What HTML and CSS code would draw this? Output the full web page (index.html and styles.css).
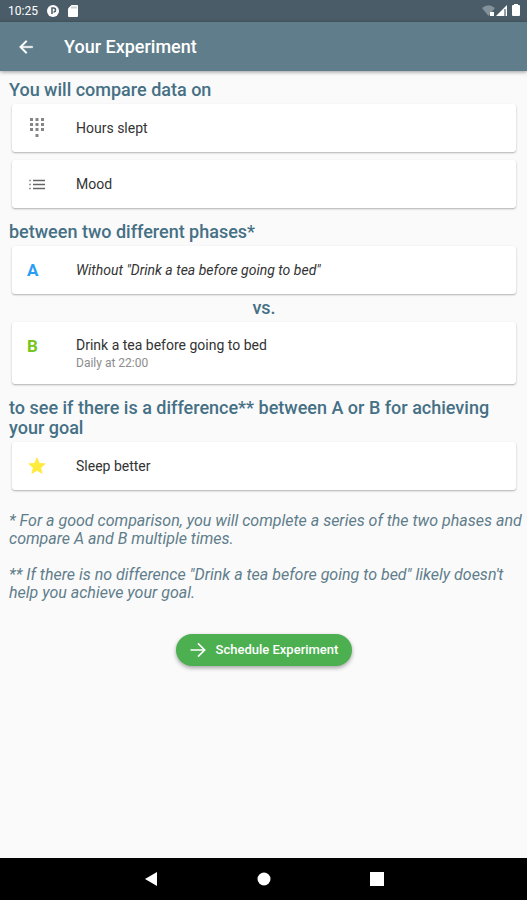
FILE: index.html
```html
<!DOCTYPE html>
<html lang="en">
	<head>
		<meta charset="utf-8">
		<meta name="viewport" content="width=device-width, initial-scale=1">
		<title>Your Experiment</title>
		<link rel="stylesheet" href="styles.css">
	</head>
	<body>
		<div class="status_bar">
			<span class="status_bar__time">10:25</span>
			<svg class="status_bar__app" width="12" height="12" viewBox="0 0 12 12"><circle cx="6" cy="6" r="6" fill="#fff"/><path d="M5 9V3h1.500a2 2 0 0 1 0 4" fill="none" stroke="#4a5c67" stroke-width="1.500"/></svg>
			<svg class="status_bar__card" width="10" height="12" viewBox="0 0 10 12"><path d="M3.500 0H9a1 1 0 0 1 1 1v10a1 1 0 0 1-1 1H1a1 1 0 0 1-1-1V3.500z" fill="#fff"/><path d="M4 1.500v2M6 1.500v2M8 1.500v2" stroke="#9aa5ac"/></svg>
			<svg class="status_bar__signal" width="40" height="14" viewBox="0 0 40 14">
				<path d="M0 4Q6.500-1.500 13 4L6.500 12z" fill="#83919a"/>
				<rect x="8" y="8" width="4" height="4" fill="#fff"/>
				<path d="M25 1v11H14z" fill="#fff"/>
				<path d="M23 5v7" stroke="#6f7f89" stroke-width="1.500"/>
				<path d="M32 0h4v1h1a1 1 0 0 1 1 1v9a1 1 0 0 1-1 1h-6a1 1 0 0 1-1-1V2a1 1 0 0 1 1-1h1z" fill="#fff"/>
			</svg>
		</div>
		<header class="app_bar">
			<button type="button" class="app_bar__back" aria-label="Back">
				<svg width="20" height="20" viewBox="0 0 24 24"><path d="M20 11H7.830l5.590-5.590L12 4l-8 8 8 8 1.410-1.410L7.830 13H20z" fill="#fff" stroke="#fff" stroke-width=".4"/></svg>
			</button>
			<h1>Your Experiment</h1>
		</header>
		<main class="content">
			<h2>You will compare data on</h2>
			<div class="card">
				<div class="card__icon">
					<svg width="20" height="20" viewBox="0 0 20 20" fill="#858585"><path d="M3 0h3v3H3zM8.500 0h3v3h-3zM14 0h3v3h-3zM3 5h3v3H3zM8.500 5h3v3h-3zM14 5h3v3h-3zM3 10h3v3H3zM8.500 10h3v3h-3zM14 10h3v3h-3zM8.500 16h3v3h-3z"/></svg>
				</div>
				<p class="card__title">Hours slept</p>
			</div>
			<div class="card">
				<div class="card__icon">
					<svg width="20" height="20" viewBox="0 0 20 20"><path d="M6 6.500h12M6 10.500h12M6 14.500h12" stroke="#666" stroke-width="1.500"/><path d="M2 6.500h2M2 10.500h2M2 14.500h2" stroke="#999" stroke-width="1.500"/></svg>
				</div>
				<p class="card__title">Mood</p>
			</div>
			<h2>between two different phases*</h2>
			<div class="card">
				<div class="card__icon card__letter is-a">A</div>
				<p class="card__title is-italic">Without "Drink a tea before going to bed"</p>
			</div>
			<p class="versus">vs.</p>
			<div class="card is-tall">
				<div class="card__icon card__letter is-b">B</div>
				<div class="card__text">
					<p class="card__title">Drink a tea before going to bed</p>
					<p class="card__sub">Daily at 22:00</p>
				</div>
			</div>
			<h2>to see if there is a difference** between A or B for achieving your goal</h2>
			<div class="card">
				<div class="card__icon">
					<svg width="20" height="20" viewBox="0 0 24 24"><path d="M12 17.270L18.180 21l-1.640-7.030L22 9.240l-7.190-.610L12 2 9.190 8.630 2 9.240l5.460 4.730L5.820 21z" fill="#ffeb3b" stroke="#ffe52a" stroke-width=".6"/></svg>
				</div>
				<p class="card__title">Sleep better</p>
			</div>
			<div class="notes">
				<p>* For a good comparison, you will complete a series of the two phases and compare A and B multiple times.</p>
				<p>** If there is no difference "Drink a tea before going to bed" likely doesn't help you achieve your goal.</p>
			</div>
			<button type="button" class="schedule">
				<svg width="20" height="20" viewBox="0 0 24 24"><path d="M3 12h17M12 4l8 8-8 8" fill="none" stroke="#fff" stroke-width="2"/></svg>
				<span>Schedule Experiment</span>
			</button>
		</main>
		<nav class="nav_bar">
			<button type="button" aria-label="Back"><svg width="14" height="14" viewBox="0 0 14 14"><path d="M13 0v14L1 7z" fill="#fff"/></svg></button>
			<button type="button" aria-label="Home"><svg width="14" height="14" viewBox="0 0 14 14"><circle cx="7" cy="7" r="6.500" fill="#fff"/></svg></button>
			<button type="button" aria-label="Recent apps"><svg width="14" height="14" viewBox="0 0 14 14"><path d="M0 0h14v14H0z" fill="#fff"/></svg></button>
		</nav>
	</body>
</html>
```

FILE: styles.css
```css
body,h1,h2,p,button { margin:0; padding:0; }
button{ border:0; background:none; font-family:inherit; }
svg{ display:block; }
body{ display:flex; flex-direction:column; min-height:100vh; background-color:#fafafa; font-family:Roboto, sans-serif; }

.status_bar{ display:flex; align-items:center; height:22px; padding:0 5px 0 8px; background-color:#4a5c67; color:#fff; }
.status_bar__time{ font-size:12px; line-height:22px; }
.status_bar__app{ margin-left:9px; }
.status_bar__card{ margin-left:9px; }
.status_bar__signal{ margin-left:auto; }

.app_bar{ position:relative; display:flex; align-items:center; height:49px; padding:0 16px; background-color:#607d8b; box-shadow:0 1px 4px rgba(0,0,0,.4); color:#fff; }
.app_bar__back{ width:48px; }
.app_bar h1{ font-size:18px; line-height:24px; font-weight:500; }

.content{ flex:1; display:flex; flex-direction:column; padding:0 8px 24px 9px; }
.content h2, .versus{ color:#457085; font-size:18px; line-height:20px; font-weight:500; }
.content h2{ padding-top:10px; }
.content h2:first-child{ padding-top:9px; }
.versus{ text-align:center; }

.card{ display:flex; align-items:center; min-height:48px; margin:4px 3px; border-radius:3px; background-color:#fff; box-shadow:0 1px 2px rgba(0,0,0,.3); }
.card.is-tall{ align-items:flex-start; min-height:46px; padding:14px 0 2px; }
.card__icon{ width:49px; padding-left:15px; }
.card__letter{ font-size:17px; line-height:20px; font-weight:700; }
.card__letter.is-a{ color:#2a9df4; }
.card__letter.is-b{ color:#76c620; }
.card__title{ color:#333; font-size:14px; line-height:18px; }
.card__title.is-italic{ font-style:italic; }
.card__sub{ color:#8c8c8c; font-size:12px; line-height:18px; }

/* the notes run a little wider than the cards */
.notes{ display:flex; flex-direction:column; gap:18px; margin-right:-6px; padding-top:18px; color:#607d8b; font-size:16px; line-height:18px; font-style:italic; }

.schedule{ display:flex; align-items:center; align-self:center; gap:8px; height:32px; margin-top:32px; padding:0 14px 0 12px; border-radius:16px; background-color:#4caf50; box-shadow:0 2px 4px rgba(0,0,0,.35); color:#fff; font-size:13px; line-height:16px; font-weight:500; }

.nav_bar{ display:flex; justify-content:center; height:42px; background-color:#000; }
.nav_bar button{ display:flex; align-items:center; justify-content:center; width:113px; }
```
